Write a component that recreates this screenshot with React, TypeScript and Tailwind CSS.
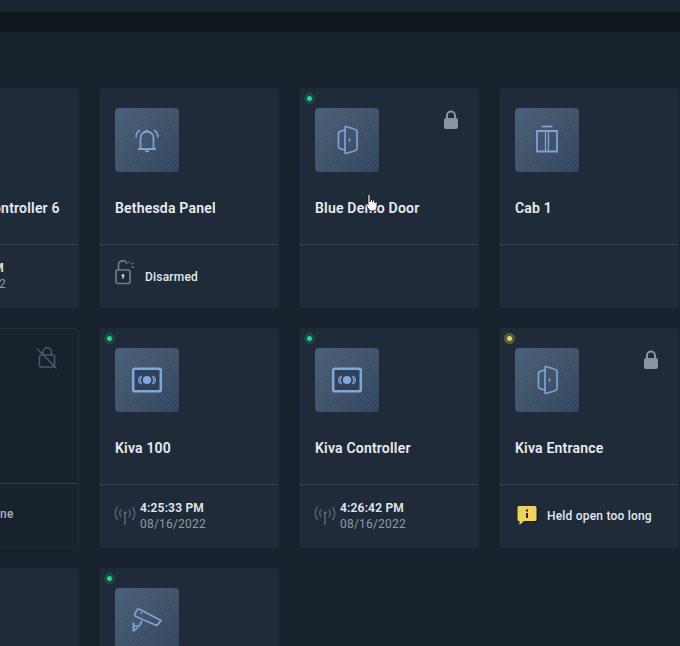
import type { ReactNode } from "react";

type Status = "green" | "yellow" | null;

type Device = {
  name?: string;
  icon?: ReactNode;
  status?: Status;
  locked?: boolean;
  footer?: ReactNode;
  disabled?: boolean;
  lockOff?: boolean;
};

const BellIcon = () => (
  <svg width="26" height="26" viewBox="0 0 26 26" fill="none" stroke="#7ba4d9" strokeWidth="1.8">
    <path d="M6.500 21.500V11a6.500 6.500 0 0 1 13 0v10.500" />
    <path d="M4 22h18" strokeWidth="2" />
    <path d="M11 24.200h4" strokeWidth="1.800" />
    <path d="M13 2.500v2" strokeWidth="1.400" />
    <path d="M2 10.500A9 9 0 0 1 6 3M24 10.500A9 9 0 0 0 20 3" strokeWidth="1.600" />
  </svg>
);

const DoorIcon = () => (
  <svg width="24" height="32" viewBox="0 0 24 32" fill="none" stroke="#7ba4d9" strokeWidth="1.700" strokeLinejoin="round">
    <path d="M10 6 5 7.500a2 2 0 0 0-1.500 2v13a2 2 0 0 0 1.500 2L10 26" />
    <path d="M10 3.500a1 1 0 0 1 1.200-1L20.500 5.500a2 2 0 0 1 1.500 2v17a2 2 0 0 1-1.500 2L11.200 29.500a1 1 0 0 1-1.200-1z" />
    <path d="M14.500 14.500v3" strokeWidth="1.600" />
  </svg>
);

const ElevatorIcon = () => (
  <svg width="24" height="30" viewBox="0 0 24 30" fill="none" stroke="#7ba4d9" strokeWidth="1.800">
    <path d="M6.500 1.500h11" />
    <path d="M2 6h20v20.500H2z" />
    <path d="M10.500 6v20.500M13.500 6v20.500" strokeWidth="1.300" />
  </svg>
);

const ReaderIcon = () => (
  <svg width="32" height="26" viewBox="0 0 32 26" fill="none">
    <rect x="2.200" y="1.700" width="27.600" height="22.600" rx="1.500" fill="#2f4159" stroke="#7fa7d9" strokeWidth="2.600" />
    <ellipse cx="16" cy="13" rx="4.200" ry="4" fill="#7fa7d9" />
    <path d="M10.500 9a7 7 0 0 0 0 8M21.500 9a7 7 0 0 1 0 8" stroke="#7fa7d9" strokeWidth="1.400" />
    <path d="M8.300 9.500a9 9 0 0 0 0 7M23.700 9.500a9 9 0 0 1 0 7" stroke="#7fa7d9" strokeWidth="1" />
  </svg>
);

const CameraIcon = () => (
  <svg width="32" height="28" viewBox="0 0 32 28" fill="none" stroke="#7ba4d9" strokeWidth="1.700" strokeLinejoin="round">
    <path d="M8.500 3.200 30 14.500q-2 3-4.500 5L5 10.500a2 2 0 0 1-1.200-2.600L6 4a1.800 1.800 0 0 1 2.500-.800z" />
    <path d="M9.500 7h1.500" />
    <path d="M11 15 8 20H3" />
    <path d="M2.500 16.500v9" strokeWidth="2" />
    <path d="M3 25l4-4" />
  </svg>
);

const LockSolid = () => (
  <svg width="16" height="20" viewBox="0 0 16 20" fill="none">
    <path d="M4 9V5.500a4 4 0 0 1 8 0V9" stroke="#8b96a4" strokeWidth="2" />
    <rect x="1" y="8" width="14" height="11" rx="2" fill="#8b96a4" />
  </svg>
);

const LockOff = () => (
  <svg width="22" height="24" viewBox="0 0 22 24" fill="none" stroke="#4d5966" strokeWidth="1.500">
    <path d="M7 9V6a4.200 4.200 0 0 1 8.400 0v3" />
    <rect x="3.500" y="9" width="15" height="12" rx="1.500" />
    <path d="M1 2.500 20.500 22.500" />
  </svg>
);

const DisarmedIcon = () => (
  <svg width="20" height="26" viewBox="0 0 20 26" fill="none" stroke="#727e8c" strokeWidth="1.600">
    <path d="M3.500 11V6a4.300 4.300 0 0 1 8.400-1.200" />
    <rect x="1" y="11" width="14" height="13.500" rx="2" />
    <circle cx="8" cy="16.500" r="1.500" fill="#c3cad2" stroke="none" />
    <path d="M8 17v3" stroke="#c3cad2" strokeWidth="1.300" />
    <path d="M14 2.500l1 1.800M18.500 4l-2 1.200M19 8.500l-2.400-.6" strokeWidth="1.300" />
  </svg>
);

const AntennaIcon = () => (
  <svg width="22" height="20" viewBox="0 0 22 20" fill="none" stroke="#505d6a" strokeWidth="1.800">
    <circle cx="11" cy="7" r="1.700" fill="#505d6a" stroke="none" />
    <path d="M11 8v11" />
    <path d="M7.200 3.500a6 6 0 0 0 0 7.500M14.800 3.500a6 6 0 0 1 0 7.500" />
    <path d="M3.500 1a11 11 0 0 0 0 13M18.500 1a11 11 0 0 1 0 13" />
  </svg>
);

const HeldIcon = () => (
  <svg width="22" height="22" viewBox="0 0 22 22">
    <path d="M2.500 1.500h17a1.500 1.500 0 0 1 1.500 1.500v13a1.500 1.500 0 0 1-1.500 1.500H2.500z" fill="#1a2029" transform="translate(1 0)" />
    <path d="M2 1h16a1.500 1.500 0 0 1 1.500 1.500v12a1.500 1.500 0 0 1-1.500 1.500H7l-4.500 4v-4H2a1.500 1.500 0 0 1-1.500-1.500v-12A1.500 1.500 0 0 1 2 1z" fill="#efd35c" />
    <path d="M9 4.500h2v2H9zM9 8h2v5H9z" fill="#2a2a22" />
  </svg>
);

const Timestamp = ({ time }: { time: string }) => (
  <div className="flex items-center gap-1 -ml-px -mt-0.5">
    <AntennaIcon />
    <div className="flex flex-col text-xs leading-4 tracking-[0.2px]">
      <span className="font-semibold text-[#e4e9ee]">{time}</span>
      <span className="text-[#8f9aa6]">08/16/2022</span>
    </div>
  </div>
);

const devices: Device[] = [
  { name: "Basement Controller 6", footer: <Timestamp time="4:25:33 PM" /> },
  {
    name: "Bethesda Panel",
    icon: <BellIcon />,
    footer: (
      <div className="flex items-center gap-2.5 -mt-2.5">
        <DisarmedIcon />
        <span className="text-xs font-medium text-[#e4e9ee] mt-2.5 tracking-[0.2px]">Disarmed</span>
      </div>
    ),
  },
  { name: "Blue Demo Door", icon: <DoorIcon />, status: "green", locked: true },
  { name: "Cab 1", icon: <ElevatorIcon /> },
  {
    disabled: true,
    lockOff: true,
    footer: (
      <div className="pl-8 -mt-1.5">
        <span className="text-xs font-medium text-[#aab3bd] tracking-[0.2px]">Door offline</span>
      </div>
    ),
  },
  { name: "Kiva 100", icon: <ReaderIcon />, status: "green", footer: <Timestamp time="4:25:33 PM" /> },
  { name: "Kiva Controller", icon: <ReaderIcon />, status: "green", footer: <Timestamp time="4:26:42 PM" /> },
  {
    name: "Kiva Entrance",
    icon: <DoorIcon />,
    status: "yellow",
    locked: true,
    footer: (
      <div className="flex items-center gap-2 ml-0.5 -mt-0.5">
        <HeldIcon />
        <span className="text-xs font-medium text-[#e4e9ee] tracking-[0.2px]">Held open too long</span>
      </div>
    ),
  },
  {},
  { icon: <CameraIcon />, status: "green" },
];

const DeviceCard = ({ device }: { device: Device }) => {
  return (
    <div
      className={`relative flex flex-col h-[220px] rounded ${
        device.disabled ? "border border-[#232e3a]" : "bg-[#1f2b38]"
      }`}
    >
      {device.status && (
        <span
          className={`absolute left-[4.5px] top-[4.5px] flex items-center justify-center w-[11px] h-[11px] rounded-full ${
            device.status === "green" ? "bg-[#1d4a45]" : "bg-[#5a5840]"
          }`}
        >
          <span
            className={`w-[5px] h-[5px] rounded-full ${
              device.status === "green" ? "bg-[#2fd08c]" : "bg-[#ecd150]"
            }`}
          />
        </span>
      )}
      {device.locked && (
        <span className="absolute right-5 top-[22px]">
          <LockSolid />
        </span>
      )}
      {device.lockOff && (
        <span className="absolute right-[20px] top-[17px]">
          <LockOff />
        </span>
      )}
      <div className="flex flex-col flex-1 px-4 pt-5 min-h-0">
        <div className="h-16 w-16 flex items-center justify-center rounded">
          {device.icon && (
            <div className="h-16 w-16 flex items-center justify-center rounded bg-[repeating-linear-gradient(135deg,rgba(255,255,255,0.025)_0_1px,transparent_1px_3px),linear-gradient(135deg,#476079_0%,#415369_50%,#2f4560_100%)]">
              {device.icon}
            </div>
          )}
        </div>
        {device.name && (
          <div className="mt-[26px] text-sm leading-5 font-semibold text-[#e8edf2] whitespace-nowrap tracking-[0.2px]">
            {device.name}
          </div>
        )}
      </div>
      <div
        className={`h-16 flex items-center px-4 border-t ${
          device.disabled ? "border-[#333f4b]" : "border-[#35414e]"
        }`}
      >
        {device.footer}
      </div>
    </div>
  );
};

const HandCursor = () => (
  <svg width="14" height="18" viewBox="0 0 14 18">
    <path
      d="M3 1.500a1 1 0 0 1 2 0V8l.5-2a1 1 0 0 1 1.800.2L7.500 8l.5-1.500a1 1 0 0 1 1.800.3V9l.5-1a1 1 0 0 1 1.700.5V13a4 4 0 0 1-4 4H7a4 4 0 0 1-3.200-1.600L1 11a1.100 1.100 0 0 1 1.700-1.300L3 10.500z"
      fill="#fff"
      stroke="#111"
      strokeWidth="0.800"
    />
  </svg>
);

export default function App() {
  return (
    <div className="relative h-[646px] w-[680px] overflow-hidden bg-[#18222d] font-['Roboto',sans-serif]">
      <div className="h-3 bg-[#1b2531]" />
      <div className="h-5 bg-[#0f161e]" />
      <div className="h-14" />
      <div className="grid grid-cols-[repeat(4,180px)] gap-5 ml-[-101px]">
        {devices.map((device, i) => (
          <DeviceCard key={i} device={device} />
        ))}
      </div>
      <span className="absolute left-[365px] top-[194px]">
        <HandCursor />
      </span>
    </div>
  );
}
